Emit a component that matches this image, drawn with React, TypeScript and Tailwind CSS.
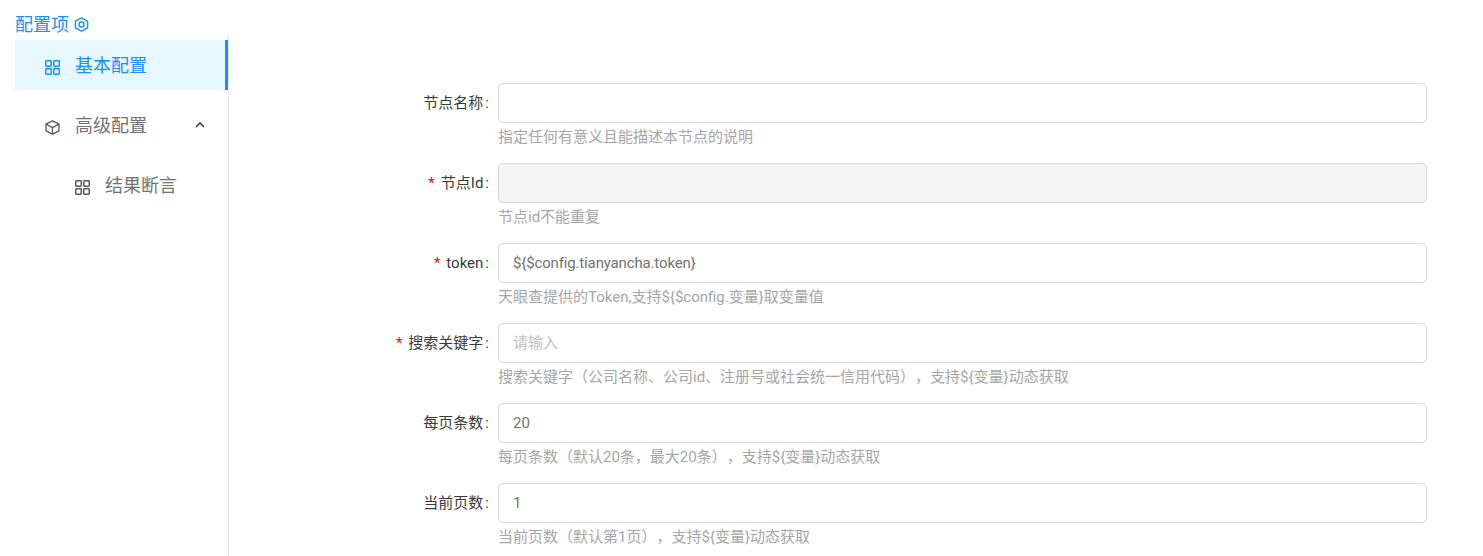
const font = { fontFamily: '"Noto Sans CJK SC", sans-serif' };
const formFont = { fontFamily: 'Roboto, "Noto Sans CJK SC", sans-serif' };

function Grid({ className }: { className: string }) {
  return (
    <svg viewBox="0 0 15 15" width="15" height="15" fill="none" stroke="currentColor" strokeWidth="1.5" className={`mt-[5px] shrink-0 ${className}`}>
      <rect x="0.75" y="0.75" width="5.5" height="5.5" rx="0.7" />
      <rect x="8.75" y="0.75" width="5.5" height="5.5" rx="0.7" />
      <rect x="0.75" y="8.75" width="5.5" height="5.5" rx="0.7" />
      <rect x="8.75" y="8.75" width="5.5" height="5.5" rx="0.7" />
    </svg>
  );
}

function Cube() {
  return (
    <svg viewBox="0 0 15 15" width="15" height="15" fill="none" stroke="currentColor" strokeWidth="1.3" strokeLinejoin="round" className="mt-[5px] shrink-0 text-[#595959]">
      <path d="M7.5.8 14 4.2V10.8L7.5 14.2 1 10.8V4.2Z" />
      <path d="M1 4.2 7.5 7.6 14 4.2M7.5 7.6V14.2" />
    </svg>
  );
}

function Hex() {
  return (
    <svg viewBox="0 0 15 15" width="15" height="15" fill="none" stroke="currentColor" strokeWidth="1.4" strokeLinejoin="round" className="mt-[3px] text-[#1890ff]">
      <path d="M7.5.8 13.6 4.2V10.8L7.5 14.2 1.4 10.8V4.2Z" />
      <circle cx="7.5" cy="7.5" r="2.5" />
    </svg>
  );
}

function Field({ label, required, value, placeholder, disabled, help, tight }: { label: string; required?: boolean; value?: string; placeholder?: string; disabled?: boolean; help: string; tight?: boolean }) {
  return (
    <div className="flex h-[80px]">
      <div className="w-[268px] h-[40px] flex items-center justify-end pr-[8px] text-[15px] text-[#3a3a3a] shrink-0">
        {required && <span className="text-[#ff0000] mr-[6px] text-[15px]">*</span>}
        <span>{label}</span>
        <span className="ml-[2px] mr-[1px]">:</span>
      </div>
      <div className="w-[929px] shrink-0">
        <div className={`h-[40px] rounded-[5px] border border-[#d9d9d9] px-[14px] flex items-center text-[15px] ${disabled ? "bg-[#f5f5f5]" : "bg-white"} ${placeholder ? "text-[#bfbfbf]" : "text-[#737373]"} ${tight ? "tracking-[-0.15px]" : ""}`}>
          {value ?? placeholder}
        </div>
        <div className="text-[15px] leading-[28px] text-[#a6a6a6] whitespace-nowrap [text-spacing-trim:space-all]">{help}</div>
      </div>
    </div>
  );
}

export default function App() {
  return (
    <div className="h-[556px] w-[1483px] overflow-hidden bg-white pl-[15px] pt-[11px]" style={font}>
      <div className="flex items-center gap-[5px] h-[24px] text-[18px] text-[#1890ff]">
        <span>配置项</span>
        <Hex />
      </div>
      <div className="flex">
        <div className="w-[214px] h-[530px] pt-[5px] border-r border-[#e8e8e8] shrink-0 text-[18px] text-[#737373]">
          <div className="h-[50px] bg-[#e6f7ff] border-r-[3px] border-[#1890ff] text-[#1890ff] flex items-center pl-[30px] gap-[15px]">
            <Grid className="text-[#1890ff]" />
            <span className="-mt-[2px]">基本配置</span>
          </div>
          <div className="h-[50px] mt-[10px] flex items-center pl-[30px] gap-[15px]">
            <Cube />
            <span className="-mt-[2px]">高级配置</span>
            <svg viewBox="0 0 12 12" width="12" height="12" fill="none" stroke="currentColor" strokeWidth="1.6" className="ml-[32px] text-[#404040]">
              <path d="M2 8 6 4 10 8" />
            </svg>
          </div>
          <div className="h-[50px] mt-[10px] flex items-center pl-[60px] gap-[15px]">
            <Grid className="text-[#595959]" />
            <span className="-mt-[2px]">结果断言</span>
          </div>
        </div>
        <div className="pl-[1px] pt-[48px]" style={formFont}>
          <Field label="节点名称" help="指定任何有意义且能描述本节点的说明" />
          <Field label="节点Id" required disabled help="节点id不能重复" />
          <Field label="token" required tight value="${$config.tianyancha.token}" help="天眼查提供的Token,支持${$config.变量}取变量值" />
          <Field label="搜索关键字" required placeholder="请输入" help="搜索关键字（公司名称、公司id、注册号或社会统一信用代码），支持${变量}动态获取" />
          <Field label="每页条数" value="20" help="每页条数（默认20条，最大20条），支持${变量}动态获取" />
          <Field label="当前页数" value="1" help="当前页数（默认第1页），支持${变量}动态获取" />
        </div>
      </div>
    </div>
  );
}
